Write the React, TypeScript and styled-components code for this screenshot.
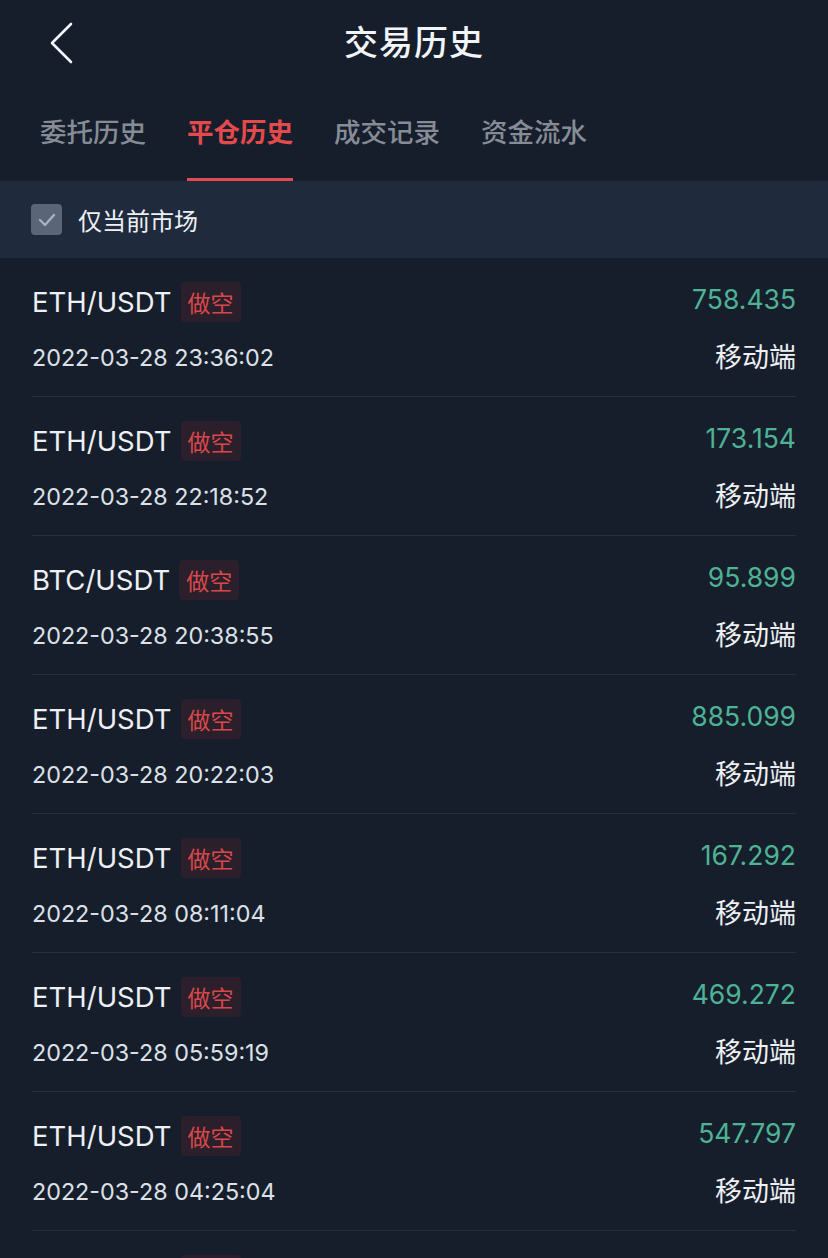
import React, { useState } from 'react';
import styled, { createGlobalStyle } from 'styled-components';

const GlobalStyle = createGlobalStyle`
  html, body {
    margin: 0;
    padding: 0;
    background: #161e2c;
  }
  body {
    font-family: Inter, "Noto Sans CJK SC", sans-serif;
    -webkit-font-smoothing: antialiased;
  }
`;

const Page = styled.div`
  width: 828px;
  min-height: 1258px;
  background: #161e2c;
  color: #eef0f3;
`;

const Header = styled.div`
  position: relative;
  height: 84px;
  box-sizing: border-box;
  padding-bottom: 4px;
  display: flex;
  align-items: center;
  justify-content: center;
`;

const BackButton = styled.button`
  position: absolute;
  left: 44px;
  top: 18px;
  width: 36px;
  height: 50px;
  padding: 0;
  border: none;
  background: transparent;
  display: flex;
  align-items: center;
  justify-content: center;
`;

const Title = styled.h1`
  margin: 0;
  font-size: 34px;
  font-weight: 500;
  color: #f2f4f7;
  letter-spacing: 1px;
`;

const TabBar = styled.div`
  display: flex;
  gap: 41px;
  padding: 0 40px;
  height: 97px;
`;

const Tab = styled.div<{ $active?: boolean }>`
  display: flex;
  align-items: center;
  box-sizing: border-box;
  height: 97px;
  padding-bottom: ${p => (p.$active ? '1px' : '4px')};
  font-size: 26.5px;
  font-weight: ${p => (p.$active ? 700 : 500)};
  color: ${p => (p.$active ? '#e24a4c' : '#868c96')};
  border-bottom: ${p => (p.$active ? '3px solid #e24a4c' : 'none')};
  cursor: pointer;
`;

const FilterBar = styled.div`
  height: 77px;
  background: #1f2a3d;
  display: flex;
  align-items: center;
  gap: 16px;
  padding: 0 31px;
  font-size: 24px;
  color: #eef0f3;
`;

const CheckBox = styled.div`
  width: 31px;
  height: 31px;
  border-radius: 4px;
  background: #5a6579;
  display: flex;
  align-items: center;
  justify-content: center;
`;

const List = styled.div`
  padding: 0 32px;
`;

const Row = styled.div`
  height: 138px;
  border-bottom: 1px solid #242f40;
  display: flex;
  flex-direction: column;
`;

const Line = styled.div<{ $top: number }>`
  display: flex;
  align-items: center;
  justify-content: space-between;
  margin-top: ${p => p.$top}px;
`;

const Pair = styled.div`
  display: flex;
  align-items: center;
  gap: 9px;
  height: 40px;
  font-size: 27.5px;
  color: #eef0f3;
`;

const SideTag = styled.span`
  height: 40px;
  padding: 0 7px;
  border-radius: 4px;
  background: #2a1f2b;
  color: #d8484a;
  font-size: 23px;
  display: flex;
  align-items: center;
`;

const Amount = styled.div`
  margin-bottom: 7px;
  font-size: 26.5px;
  color: #4eb394;
`;

const DateText = styled.div`
  height: 32px;
  line-height: 32px;
  font-size: 23.3px;
  color: #dde1e7;
`;

const Source = styled.div`
  font-size: 27px;
  line-height: 32px;
  color: #eef0f3;
`;

const tabs = ['委托历史', '平仓历史', '成交记录', '资金流水'];

const records = [
  { pair: 'ETH/USDT', time: '2022-03-28 23:36:02', amount: '758.435' },
  { pair: 'ETH/USDT', time: '2022-03-28 22:18:52', amount: '173.154' },
  { pair: 'BTC/USDT', time: '2022-03-28 20:38:55', amount: '95.899' },
  { pair: 'ETH/USDT', time: '2022-03-28 20:22:03', amount: '885.099' },
  { pair: 'ETH/USDT', time: '2022-03-28 08:11:04', amount: '167.292' },
  { pair: 'ETH/USDT', time: '2022-03-28 05:59:19', amount: '469.272' },
  { pair: 'ETH/USDT', time: '2022-03-28 04:25:04', amount: '547.797' },
  { pair: 'ETH/USDT', time: '2022-03-28 03:12:47', amount: '312.508' },
];

function App() {
  const [activeTab, setActiveTab] = useState(1);

  return (
    <Page>
      <GlobalStyle />
      <Header>
        <BackButton aria-label="back">
          <svg width="24" height="42" viewBox="0 0 24 42" fill="none">
            <path d="M21 2 L2 21 L21 40" stroke="#f2f4f7" strokeWidth="2.6" strokeLinecap="round" strokeLinejoin="round" />
          </svg>
        </BackButton>
        <Title>交易历史</Title>
      </Header>
      <TabBar>
        {tabs.map((t, i) => (
          <Tab key={t} $active={i === activeTab} onClick={() => setActiveTab(i)}>
            {t}
          </Tab>
        ))}
      </TabBar>
      <FilterBar>
        <CheckBox>
          <svg width="18" height="14" viewBox="0 0 18 14" fill="none">
            <path d="M2 7 L7 12 L16 2" stroke="#a9b1bf" strokeWidth="2.4" strokeLinecap="round" strokeLinejoin="round" />
          </svg>
        </CheckBox>
        仅当前市场
      </FilterBar>
      <List>
        {records.map((r, i) => (
          <Row key={i}>
            <Line $top={24}>
              <Pair>
                {r.pair}
                <SideTag>做空</SideTag>
              </Pair>
              <Amount>{r.amount}</Amount>
            </Line>
            <Line $top={20}>
              <DateText>{r.time}</DateText>
              <Source>移动端</Source>
            </Line>
          </Row>
        ))}
      </List>
    </Page>
  );
}

export default App;
